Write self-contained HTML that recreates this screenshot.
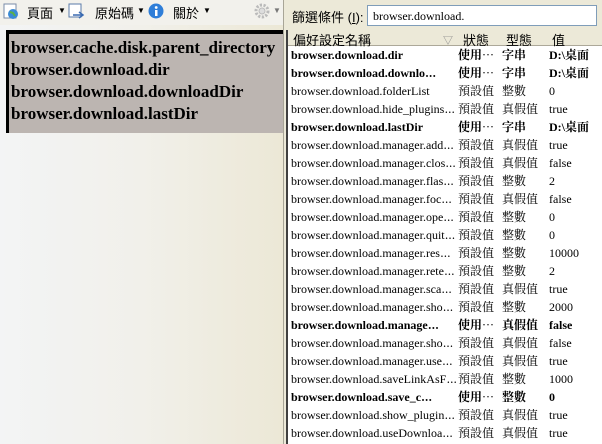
<!DOCTYPE html>
<html><head><meta charset="utf-8"><style>
*{margin:0;padding:0;box-sizing:border-box}
body{width:602px;height:444px;overflow:hidden;position:relative;background:#ece9d8;font-family:"Liberation Serif","Noto Serif CJK SC",serif;}
#left{position:absolute;left:0;top:0;width:283px;height:444px;background:linear-gradient(90deg,#f3f4f5 0%,#f1f0ea 50%,#ece8d6 100%);}
#tb{position:absolute;left:0;top:0;width:283px;height:25px;background:#f2f1ec;font-family:"Liberation Sans","Noto Sans CJK TC",sans-serif;font-size:13px;color:#000}
#tb span{position:absolute;top:3px}
#box{position:absolute;left:6px;top:30px;width:277px;height:103px;background:#bcb5b1;border-left:3px solid #000;border-top:4px solid #000;padding-top:3px}
#box div{font-family:"Liberation Serif",serif;font-weight:bold;font-size:17px;line-height:22px;padding-left:2px;color:#000;white-space:nowrap}
#sep{position:absolute;left:283px;top:0;width:1px;height:444px;background:#a8a597}
#filter{position:absolute;left:292px;top:7px;font-family:"Liberation Sans","Noto Sans CJK TC",sans-serif;font-size:13px}
#fin{position:absolute;left:367px;top:5px;width:230px;height:21px;background:#fff;border:1px solid #7f9db9;font-size:12px;padding:3px 0 0 5px}
#list{position:absolute;left:286px;top:30px;width:316px;height:414px;background:#fff;border-left:2px solid #404040}
#hdr{position:absolute;left:0;top:0;width:316px;height:16px;background:#ece9d8;border-bottom:1px solid #aca899;font-family:"Liberation Sans","Noto Sans CJK TC",sans-serif;font-size:13px}
#hdr span{position:absolute;top:0px}
.r{position:absolute;left:0;height:18px;width:316px;font-size:12px;line-height:18px;white-space:nowrap}
.r span{position:absolute;top:0;overflow:hidden}
.b{font-weight:bold}
.c1{left:3px;width:165px}.c2{left:170px}.c3{left:214px}.c4{left:261px}
</style></head><body>
<div id="left">
<div id="tb">
<svg style="position:absolute;left:3px;top:3px" width="16" height="16"><rect x="1" y="1" width="12" height="14" fill="#fff" stroke="#7a8ca8"/><circle cx="10" cy="11" r="5" fill="#3a8ad6"/><path d="M7 9l3 1 2 3" stroke="#5bb04a" stroke-width="2" fill="none"/></svg>
<span style="left:27px">頁面</span><span style="left:58px;font-size:8px;top:6px">▼</span>
<svg style="position:absolute;left:68px;top:3px" width="17" height="16"><rect x="1" y="1" width="12" height="13" fill="#fff" stroke="#5a7aa8"/><path d="M5 12h10M11 9l4 3-4 3" stroke="#3a6ab0" stroke-width="1.5" fill="none"/></svg>
<span style="left:95px">原始碼</span><span style="left:137px;font-size:8px;top:6px">▼</span>
<svg style="position:absolute;left:148px;top:3px" width="16" height="16"><circle cx="8" cy="8" r="7.5" fill="#2f7ed8"/><rect x="7" y="7" width="2.5" height="6" fill="#fff"/><circle cx="8.2" cy="4.5" r="1.4" fill="#fff"/></svg>
<span style="left:173px">關於</span><span style="left:203px;font-size:8px;top:6px">▼</span>
<svg style="position:absolute;left:253px;top:2px" width="18" height="18"><circle cx="9" cy="9" r="6" fill="none" stroke="#bbb" stroke-width="3" stroke-dasharray="2.2 1.5"/><circle cx="9" cy="9" r="3" fill="#ddd" stroke="#bbb"/></svg>
<span style="left:273px;font-size:8px;top:6px;color:#777">▼</span>
</div>
<div id="box">
<div>browser.cache.disk.parent_directory</div>
<div>browser.download.dir</div>
<div>browser.download.downloadDir</div>
<div>browser.download.lastDir</div>
</div>
</div>
<div id="sep"></div>
<div id="filter">篩選條件 (<u>I</u>):</div>
<div id="fin">browser.download.</div>
<div id="list">
<div id="hdr"><span style="left:5px">偏好設定名稱</span><span style="left:155px;color:#888;font-size:10px;top:2px">▽</span><span style="left:175px">狀態</span><span style="left:218px">型態</span><span style="left:264px">值</span></div>
<div id="rows"></div>
</div>
<script>
var d=[["browser.download.dir","使用⋯","字串","D:\\桌面",1],["browser.download.downlo⋯","使用⋯","字串","D:\\桌面",1],["browser.download.folderList","預設值","整數","0"],["browser.download.hide_plugins⋯","預設值","真假值","true"],["browser.download.lastDir","使用⋯","字串","D:\\桌面",1],["browser.download.manager.add⋯","預設值","真假值","true"],["browser.download.manager.clos⋯","預設值","真假值","false"],["browser.download.manager.flas⋯","預設值","整數","2"],["browser.download.manager.foc⋯","預設值","真假值","false"],["browser.download.manager.ope⋯","預設值","整數","0"],["browser.download.manager.quit⋯","預設值","整數","0"],["browser.download.manager.res⋯","預設值","整數","10000"],["browser.download.manager.rete⋯","預設值","整數","2"],["browser.download.manager.sca⋯","預設值","真假值","true"],["browser.download.manager.sho⋯","預設值","整數","2000"],["browser.download.manage⋯","使用⋯","真假值","false",1],["browser.download.manager.sho⋯","預設值","真假值","false"],["browser.download.manager.use⋯","預設值","真假值","true"],["browser.download.saveLinkAsF⋯","預設值","整數","1000"],["browser.download.save_c⋯","使用⋯","整數","0",1],["browser.download.show_plugin⋯","預設值","真假值","true"],["browser.download.useDownloa⋯","預設值","真假值","true"]];
var h="";d.forEach(function(r,i){h+='<div class="r'+(r[4]?' b':'')+'" style="top:'+(16+i*18)+'px"><span class="c1">'+r[0]+'</span><span class="c2">'+r[1]+'</span><span class="c3">'+r[2]+'</span><span class="c4">'+r[3]+'</span></div>';});
document.getElementById("rows").innerHTML=h;
</script>
</body></html>
